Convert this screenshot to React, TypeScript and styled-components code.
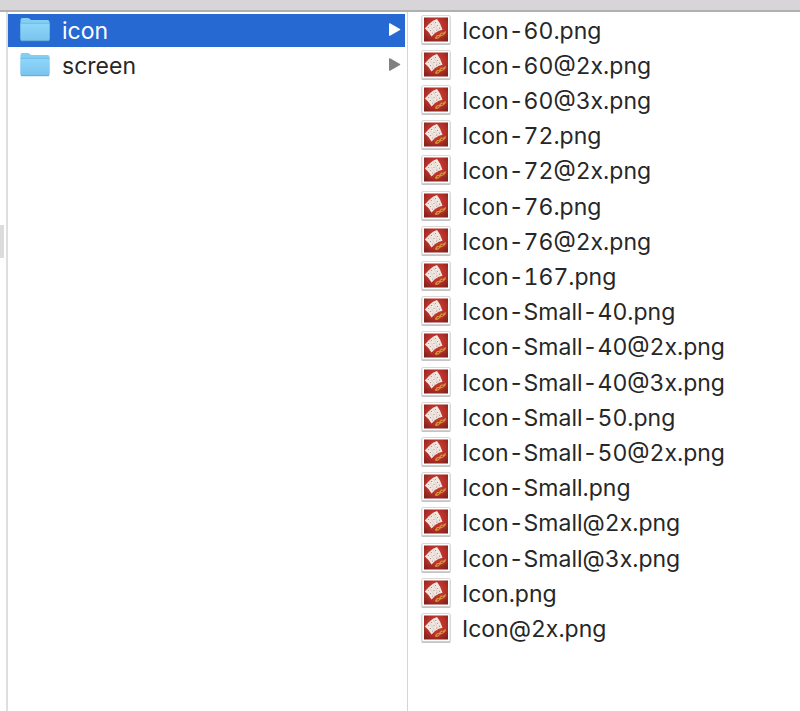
import React, { useState } from "react";
import styled, { createGlobalStyle } from "styled-components";

const GlobalStyle = createGlobalStyle`
  * { box-sizing: border-box; }
  body {
    margin: 0;
    background: #fff;
    color: #272727;
    font-family: Inter, "Liberation Sans", sans-serif;
  }
`;

const Window = styled.div`
  display: flex;
  flex-direction: column;
  height: 100vh;
  overflow: hidden;
`;

const Toolbar = styled.header`
  flex: none;
  height: 12px;
  background: #d7d5d7;
  border-bottom: 2px solid #b1b0b1;
`;

const Browser = styled.main`
  flex: 1;
  display: flex;
  min-height: 0;
`;

const ParentColumn = styled.div`
  flex: none;
  width: 8px;
  padding-top: 30vh;
  border-right: 2px solid #dfdfdf;
`;

const ParentSelection = styled.div`
  width: 4px;
  height: 33px;
  background: #dcdcdc;
`;

const FolderColumn = styled.nav`
  flex: none;
  width: 50%;
  padding: 2px 2px 0 0;
  border-right: 1px solid #d5d5d5;
`;

const FileColumn = styled.section`
  flex: 1;
  min-width: 0;
  padding-top: 2px;
`;

const List = styled.ul`
  margin: 0;
  padding: 0;
  list-style: none;
`;

const Item = styled.li`
  padding-bottom: 2px;

  &:nth-child(5n) {
    padding-bottom: 3px;
  }
`;

const Row = styled.button<{ $selected?: boolean }>`
  display: flex;
  align-items: center;
  width: 100%;
  height: 33px;
  border: 0;
  background: ${(p) => (p.$selected ? "#2669d3" : "transparent")};
  color: ${(p) => (p.$selected ? "#fff" : "inherit")};
  font: 400 23px/32px Inter, "Liberation Sans", sans-serif;
  font-variant-numeric: tabular-nums;
  text-align: left;
  white-space: nowrap;
`;

const FolderRow = styled(Row)`
  gap: 11px;
  padding: 0 4px 0 12px;
`;

const FileRow = styled(Row)`
  gap: 11px;
  padding: 0 13px;
`;

const Name = styled.span`
  flex: 1;
  padding-top: 1px;
`;

const Picture = styled.svg`
  display: block;
  flex: none;
`;

function FolderIcon() {
  return (
    <Picture width="31" height="27" viewBox="0 0 31 27" aria-hidden="true">
      <defs>
        <linearGradient id="folder-front" x1="0" y1="0" x2="0" y2="1">
          <stop offset="0" stopColor="#8fd6f8" />
          <stop offset="1" stopColor="#78c4ef" />
        </linearGradient>
      </defs>
      <path d="M.5 3Q.5 1 2.5 1H8Q9.1 1 9.9 2.1T12 3H27.5Q29.5 3 29.5 5V22H.5Z" fill="#83cff2" />
      <path d="M.5 6.5H29.5V22.5Q29.5 24 28 24H2Q.5 24 .5 22.5Z" fill="url(#folder-front)" />
      <path d="M.5 6.3H29.5" stroke="#6fbde6" strokeWidth="1" />
      <path d="M1 23.7H29" stroke="#65a9d2" strokeWidth="1" />
    </Picture>
  );
}

function Disclosure({ color }: { color: string }) {
  return (
    <Picture width="13" height="17" viewBox="0 0 13 17" aria-hidden="true">
      <path d="M1 1.8Q1 .8 2 1.3L12 7Q12.6 7.5 12 8L2 13.7Q1 14.2 1 13.2Z" fill={color} />
    </Picture>
  );
}

function CardThumbnail() {
  return (
    <Picture width="30" height="31" viewBox="0 0 30 31" aria-hidden="true">
      <defs>
        <radialGradient id="card-felt" cx=".5" cy=".4" r=".75">
          <stop offset="0" stopColor="#d04432" />
          <stop offset=".55" stopColor="#b5302a" />
          <stop offset="1" stopColor="#79201b" />
        </radialGradient>
      </defs>
      <rect x=".5" y="1.5" width="29" height="28.5" rx="1" fill="#c4c4c4" />
      <rect x="1" y=".5" width="28" height="28" rx="1" fill="#fff" stroke="#c9c9c9" strokeWidth=".7" />
      <rect x="3" y="2.5" width="24" height="24" fill="url(#card-felt)" />
      <path d="M3.8 13.5L8 9L12 5.8L16 4L19 8.5L21.5 14.8L18 15.8L14 18L10.5 21.5L7.5 17Z" fill="#f1e7e1" />
      <path d="M8 9L14 18M12 6.5L17.5 16" stroke="#d4c3bd" strokeWidth=".6" />
      <g fill="#a38f89">
        <circle cx="7.5" cy="12.5" r=".6" />
        <circle cx="10.5" cy="9.5" r=".6" />
        <circle cx="14.5" cy="7.5" r=".6" />
        <circle cx="9.5" cy="15.5" r=".6" />
        <circle cx="13" cy="12.5" r=".6" />
        <circle cx="16.5" cy="10.5" r=".6" />
        <circle cx="11.5" cy="18" r=".6" />
        <circle cx="15.5" cy="15" r=".6" />
        <circle cx="18.5" cy="13.2" r=".6" />
      </g>
      <path d="M14 22.5L16 20L18 20L20 17.5L22 17.8L25 15.8L24.5 18.5L22 20.5L19.5 21.5L17 23.8L14.5 24Z" fill="#d98f35" />
      <path d="M16 22.3L18 21.3M20 19.6L22 19" stroke="#8d3b17" strokeWidth=".8" />
    </Picture>
  );
}

const folders = ["icon", "screen"];

const files = [
  "Icon-60.png",
  "Icon-60@2x.png",
  "Icon-60@3x.png",
  "Icon-72.png",
  "Icon-72@2x.png",
  "Icon-76.png",
  "Icon-76@2x.png",
  "Icon-167.png",
  "Icon-Small-40.png",
  "Icon-Small-40@2x.png",
  "Icon-Small-40@3x.png",
  "Icon-Small-50.png",
  "Icon-Small-50@2x.png",
  "Icon-Small.png",
  "Icon-Small@2x.png",
  "Icon-Small@3x.png",
  "Icon.png",
  "Icon@2x.png",
];

export default function App() {
  const [current, setCurrent] = useState("icon");

  return (
    <>
      <GlobalStyle />
      <Window>
        <Toolbar />
        <Browser>
          <ParentColumn>
            <ParentSelection />
          </ParentColumn>
          <FolderColumn aria-label="Folders">
            <List>
              {folders.map((name) => {
                const selected = name === current;
                return (
                  <Item key={name}>
                    <FolderRow
                      type="button"
                      $selected={selected}
                      aria-pressed={selected}
                      onClick={() => setCurrent(name)}
                    >
                      <FolderIcon />
                      <Name>{name}</Name>
                      <Disclosure color={selected ? "#fff" : "#808080"} />
                    </FolderRow>
                  </Item>
                );
              })}
            </List>
          </FolderColumn>
          <FileColumn aria-label="Files">
            <List>
              {files.map((name) => (
                <Item key={name}>
                  <FileRow type="button">
                    <CardThumbnail />
                    <Name>{name}</Name>
                  </FileRow>
                </Item>
              ))}
            </List>
          </FileColumn>
        </Browser>
      </Window>
    </>
  );
}
